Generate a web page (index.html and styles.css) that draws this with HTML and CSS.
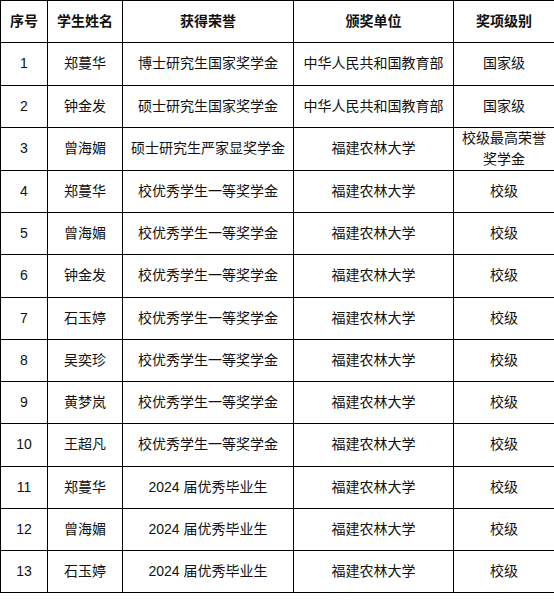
FILE: index.html
```html
<!DOCTYPE html>
<html lang="zh">
<head>
<meta charset="utf-8">
<title>获奖名单</title>
<link rel="stylesheet" href="styles.css">
</head>
<body>
<table class="awards">
  <colgroup>
    <col class="c-no">
    <col class="c-name">
    <col class="c-honor">
    <col class="c-org">
    <col class="c-level">
  </colgroup>
  <thead>
    <tr><th>序号</th><th>学生姓名</th><th>获得荣誉</th><th>颁奖单位</th><th>奖项级别</th></tr>
  </thead>
  <tbody>
    <tr><td>1</td><td>郑蔓华</td><td>博士研究生国家奖学金</td><td>中华人民共和国教育部</td><td>国家级</td></tr>
    <tr><td>2</td><td>钟金发</td><td>硕士研究生国家奖学金</td><td>中华人民共和国教育部</td><td>国家级</td></tr>
    <tr><td>3</td><td>曾海媚</td><td>硕士研究生严家显奖学金</td><td>福建农林大学</td><td>校级最高荣誉<br>奖学金</td></tr>
    <tr><td>4</td><td>郑蔓华</td><td>校优秀学生一等奖学金</td><td>福建农林大学</td><td>校级</td></tr>
    <tr><td>5</td><td>曾海媚</td><td>校优秀学生一等奖学金</td><td>福建农林大学</td><td>校级</td></tr>
    <tr><td>6</td><td>钟金发</td><td>校优秀学生一等奖学金</td><td>福建农林大学</td><td>校级</td></tr>
    <tr><td>7</td><td>石玉婷</td><td>校优秀学生一等奖学金</td><td>福建农林大学</td><td>校级</td></tr>
    <tr><td>8</td><td>吴奕珍</td><td>校优秀学生一等奖学金</td><td>福建农林大学</td><td>校级</td></tr>
    <tr><td>9</td><td>黄梦岚</td><td>校优秀学生一等奖学金</td><td>福建农林大学</td><td>校级</td></tr>
    <tr><td>10</td><td>王超凡</td><td>校优秀学生一等奖学金</td><td>福建农林大学</td><td>校级</td></tr>
    <tr><td>11</td><td>郑蔓华</td><td>2024 届优秀毕业生</td><td>福建农林大学</td><td>校级</td></tr>
    <tr><td>12</td><td>曾海媚</td><td>2024 届优秀毕业生</td><td>福建农林大学</td><td>校级</td></tr>
    <tr><td>13</td><td>石玉婷</td><td>2024 届优秀毕业生</td><td>福建农林大学</td><td>校级</td></tr>
  </tbody>
</table>
</body>
</html>
```
FILE: styles.css
```css
html, body {
  margin: 0;
  padding: 0;
  background: #fff;
}
body {
  font-family: "Liberation Sans", "Noto Sans CJK SC", sans-serif;
  color: #111;
  font-size: 14px;
}
.awards {
  border-collapse: collapse;
  table-layout: fixed;
  width: 554px;
}
.c-no { width: 47px; }
.c-name { width: 75px; }
.c-honor { width: 171px; }
.c-org { width: 160px; }
.c-level { width: 101px; }
.awards tr {
  height: 42.25px;
}
.awards th,
.awards td {
  border: 1px solid #000;
  padding: 0;
  text-align: center;
  vertical-align: middle;
  line-height: 21px;
  white-space: nowrap;
}
.awards th {
  font-weight: bold;
  font-size: 14px;
}
.awards td {
  font-weight: normal;
}
```
